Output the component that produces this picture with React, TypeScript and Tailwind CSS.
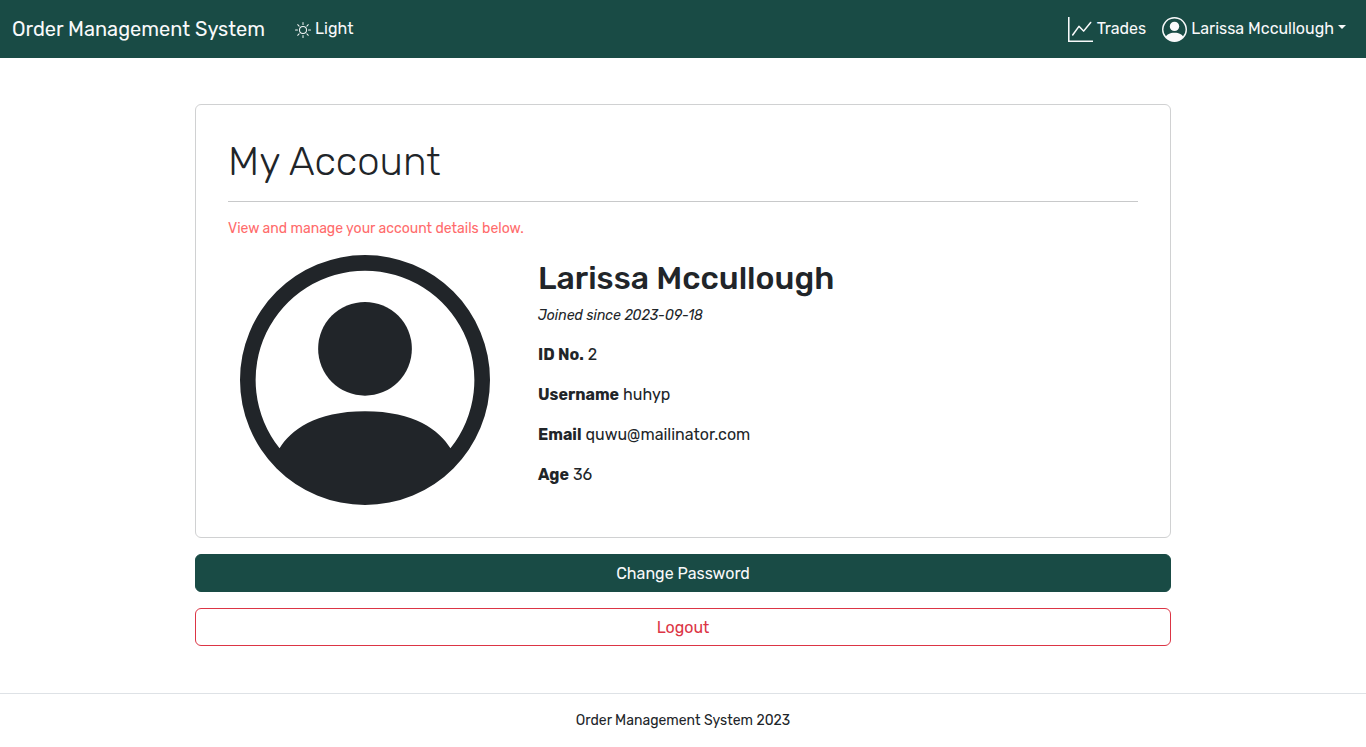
import { BsGraphUp, BsPersonCircle, BsSun } from "react-icons/bs";

const details = [
  { label: "ID No.", value: "2" },
  { label: "Username", value: "huhyp" },
  { label: "Email", value: "quwu@mailinator.com" },
  { label: "Age", value: "36" },
];

function Navbar() {
  return (
    <header className="flex min-h-[58px] flex-wrap items-center bg-[#194b45] px-3 text-[#f8f9fa]">
      <a href="#" className="mr-[30px] text-xl leading-[30px]">
        Order Management System
      </a>
      <button type="button" className="flex items-center gap-1">
        <BsSun className="mt-0.5 size-4" />
        Light
      </button>
      <nav className="ml-auto flex items-center gap-4 pr-2">
        <a href="#" className="flex items-center gap-1">
          <BsGraphUp className="size-[25px]" />
          Trades
        </a>
        <button type="button" className="flex items-center gap-1">
          <BsPersonCircle className="size-[25px]" />
          Larissa Mccullough
          <svg viewBox="0 0 8 4" className="-mt-1 h-1 w-2" fill="currentColor" aria-hidden="true">
            <path d="M0 0h8L4 4z" />
          </svg>
        </button>
      </nav>
    </header>
  );
}

function AccountCard() {
  return (
    <section className="rounded-md border border-[#d0d1d2] p-8">
      <h1 className="text-[40px] leading-[50px] font-light">My Account</h1>
      <hr className="mt-3.5 mb-4 border-[#c8c9ca]" />
      <p className="mb-4 text-sm leading-[21px] text-[#ff6b6b]">
        View and manage your account details below.
      </p>
      <div className="flex flex-wrap gap-12 px-3">
        <BsPersonCircle className="size-[250px]" />
        <div className="pt-1">
          <h2 className="mb-2 text-[32px] leading-[38px] font-medium">Larissa Mccullough</h2>
          <p className="mb-[17px] text-sm leading-[21px] italic">Joined since 2023-09-18</p>
          <dl className="flex flex-col gap-4">
            {details.map((item) => (
              <div key={item.label} className="flex gap-1">
                <dt className="font-bold">{item.label}</dt>
                <dd>{item.value}</dd>
              </div>
            ))}
          </dl>
        </div>
      </div>
    </section>
  );
}

export default function App() {
  return (
    <div className="flex min-h-screen flex-col bg-white font-['Rubik','Inter',sans-serif] text-base text-[#212529]">
      <Navbar />
      <main className="mx-auto flex w-full max-w-[1000px] grow flex-col gap-4 px-3 pt-[46px] pb-[47px]">
        <AccountCard />
        <button
          type="button"
          className="rounded-md border border-[#194b45] bg-[#194b45] px-3 pt-[7px] pb-[5px] text-[#f8f9fa]"
        >
          Change Password
        </button>
        <button
          type="button"
          className="rounded-md border border-[#dc3545] px-3 pt-[7px] pb-[5px] text-[#dc3545]"
        >
          Logout
        </button>
      </main>
      <footer className="border-t border-[#dee2e6] pt-4 pb-[17px] text-center text-sm leading-[21px]">
        Order Management System 2023
      </footer>
    </div>
  );
}
